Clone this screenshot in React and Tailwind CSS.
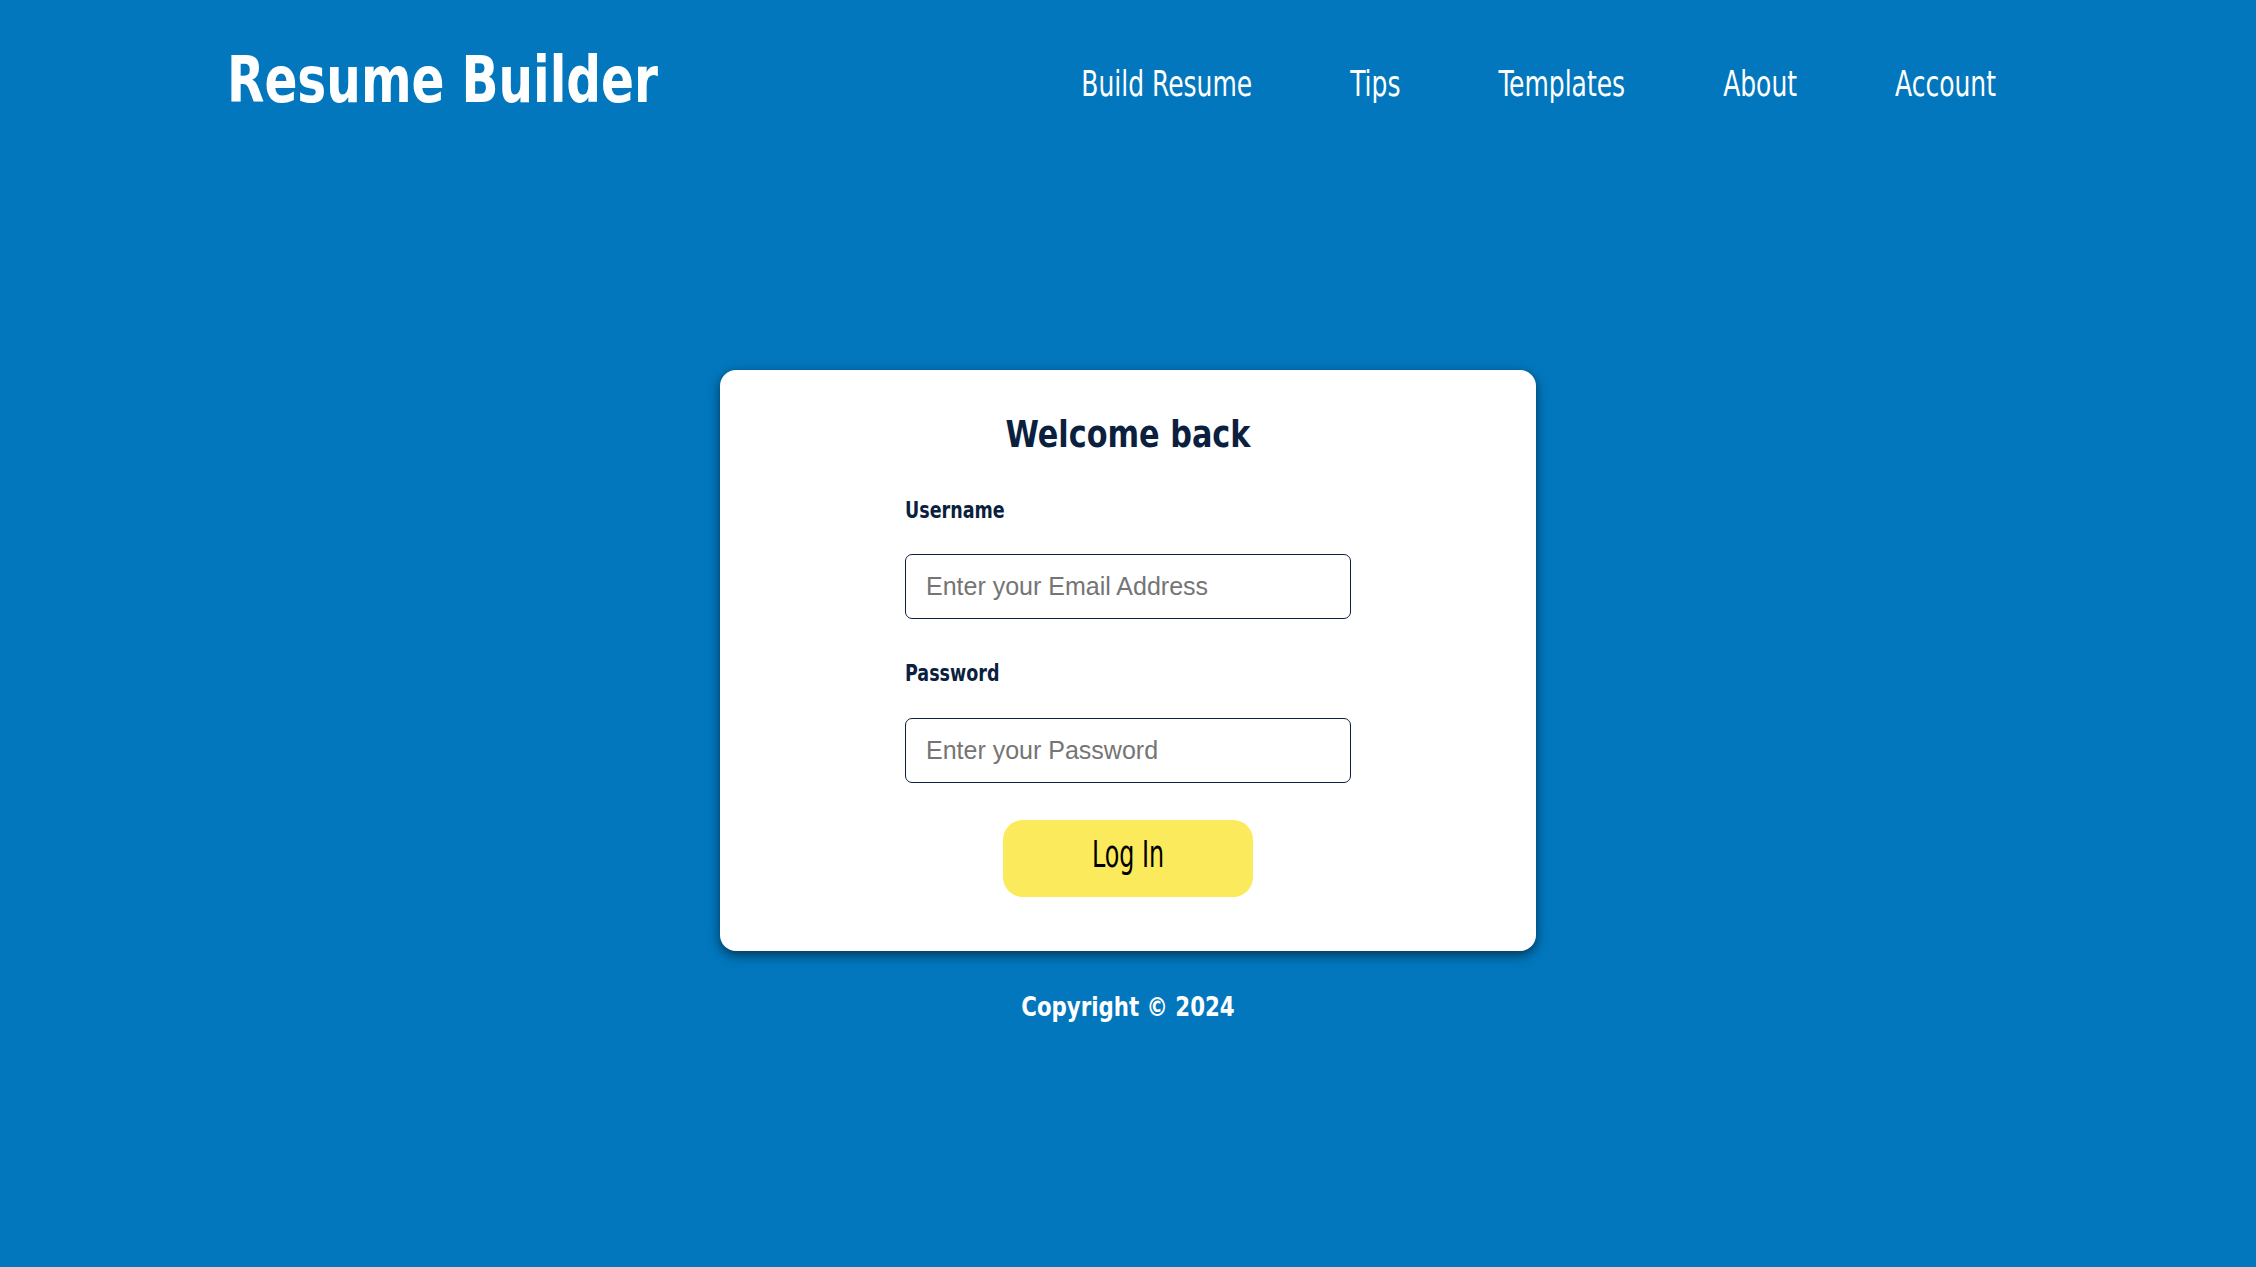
import React from 'react';

// Teko-like condensed face is not installed; DejaVu Sans Condensed sized to width, stretched vertically
const condensed = { fontFamily: '"Liberation Sans Narrow", "DejaVu Sans Condensed", "Liberation Sans", sans-serif' };

const navLinks = ['Build Resume', 'Tips', 'Templates', 'About', 'Account'];

function Header() {
    return (
        <header className="flex items-start justify-between pl-[227px] pr-[260px] pt-[54px]" style={condensed}>
            <h1 className="text-[54px] leading-none font-bold text-white scale-y-[1.17]">Resume Builder</h1>
            <nav className="flex gap-[98px] mt-[16px]">
                {navLinks.map((link) => (
                    <a key={link} href="#" className="inline-block text-[27.8px] leading-none text-white scale-y-[1.3]">
                        {link}
                    </a>
                ))}
            </nav>
        </header>
    );
}

function Field({ label, type, placeholder, className = '' }) {
    return (
        <div className={`flex flex-col ${className}`}>
            <label className="block text-[19.5px] leading-none font-bold text-[#0b1f3f] scale-y-[1.15] origin-left" style={condensed}>
                {label}
            </label>
            <input
                type={type}
                placeholder={placeholder}
                className="mt-[34px] h-[65px] w-[446px] rounded-[7px] border border-[#0b1f3f] bg-white px-[20px] text-[25px] text-[#333] placeholder:text-[#757575] outline-none"
                style={{ fontFamily: '"Liberation Sans", Arial, sans-serif' }}
            />
        </div>
    );
}

function LoginCard() {
    return (
        <div className="mx-auto mt-[262px] flex w-[816px] flex-col items-center rounded-2xl bg-white pt-[48px] pb-[54px] shadow-[0_4px_12px_rgba(0,0,0,0.55)]">
            <h2 className="text-[33.7px] leading-none font-bold text-[#0b1f3f] scale-y-[1.1]" style={condensed}>
                Welcome back
            </h2>
            <div className="mt-[49px] flex flex-col">
                <Field label="Username" type="email" placeholder="Enter your Email Address" />
                <Field label="Password" type="password" placeholder="Enter your Password" className="mt-[45px]" />
            </div>
            <button
                className="mt-[37px] flex h-[77px] w-[250px] items-center justify-center rounded-[20px] bg-[#fbea5b] pb-[6px]"
                style={condensed}
            >
                <span className="inline-block text-[26.5px] leading-none text-black scale-y-[1.38]">Log In</span>
            </button>
        </div>
    );
}

export default function App() {
    return (
        <div className="min-h-[1267px] w-full bg-[#0277bd]">
            <Header />
            <LoginCard />
            <footer className="mt-[45px] flex justify-center" style={condensed}>
                <span className="inline-block text-[23.7px] leading-none font-bold text-white scale-y-[1.1]">Copyright © 2024</span>
            </footer>
        </div>
    );
}
